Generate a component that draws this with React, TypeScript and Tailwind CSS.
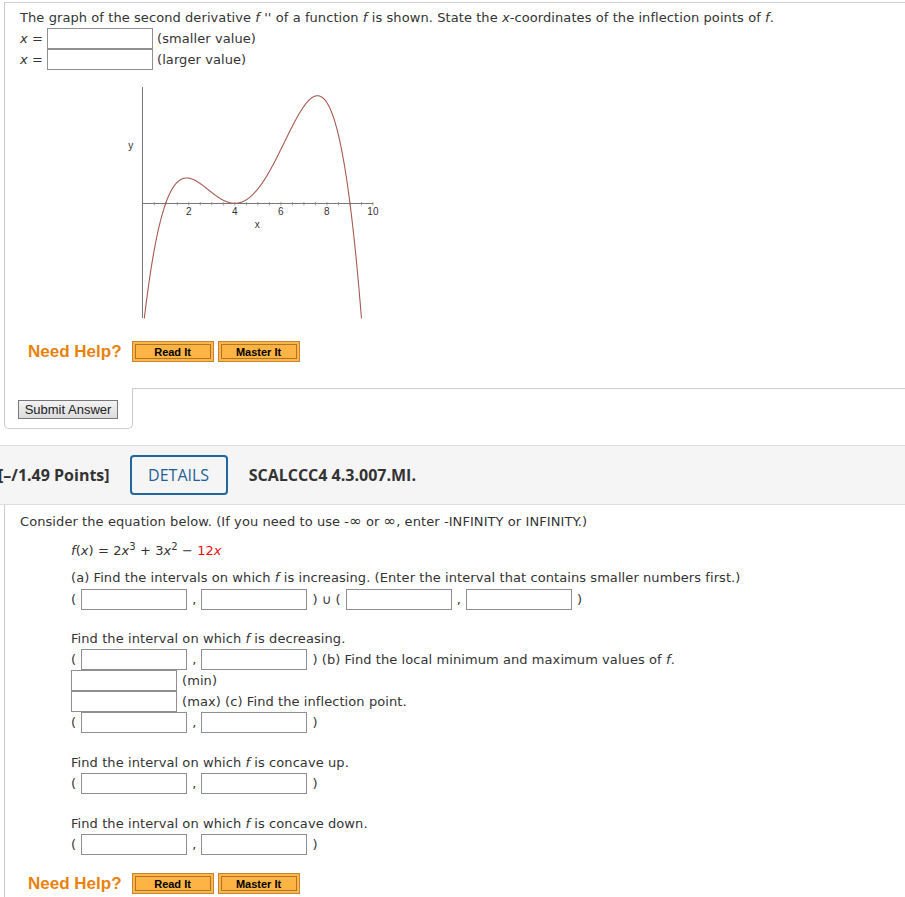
import React from 'react';

const g = (x: number) => -(x - 1) * (x - 4) ** 2 * (x - 9);
const X0 = 142.7;
const U = 23.03;
const Y0 = 203.3;
const K = 0.898;

function curvePath() {
  const pts: string[] = [];
  for (let x = 0; x <= 9.7; x += 0.02) {
    pts.push(`${(X0 + x * U).toFixed(2)},${(Y0 - K * g(x)).toFixed(2)}`);
  }
  return 'M' + pts.join(' L');
}

function Graph() {
  const ticks: number[] = [];
  for (let t = 0.5; t <= 10; t += 0.5) ticks.push(t);
  return (
    <svg width="272" height="240" viewBox="118 84 272 240" className="ml-[98px] mt-[14px] block">
      <defs>
        <clipPath id="plot">
          <rect x="118" y="84" width="272" height="234.5" />
        </clipPath>
      </defs>
      <line x1="142.5" y1="87" x2="142.5" y2="318" stroke="#777" strokeWidth="1" />
      <line x1="142.5" y1="203.5" x2="373" y2="203.5" stroke="#777" strokeWidth="1" />
      {ticks.map((t) => (
        <line key={t} x1={X0 + t * U} y1="202" x2={X0 + t * U} y2="205.5" stroke="#888" strokeWidth="0.8" />
      ))}
      {[2, 4, 6, 8, 10].map((n) => (
        <text key={n} x={X0 + n * U} y="215" fontSize="10" textAnchor="middle" fill="#333" fontFamily="Liberation Sans, Arial, sans-serif">
          {n}
        </text>
      ))}
      <text x="257.3" y="227.5" fontSize="10" textAnchor="middle" fill="#333" fontFamily="Liberation Sans, Arial, sans-serif">x</text>
      <text x="130.7" y="149" fontSize="10" textAnchor="middle" fill="#333" fontFamily="Liberation Sans, Arial, sans-serif">y</text>
      <path d={curvePath()} fill="none" stroke="#a65a50" strokeWidth="1.1" clipPath="url(#plot)" />
    </svg>
  );
}

function Box({ className = '' }: { className?: string }) {
  return <span className={`inline-block w-[106px] h-[21px] border border-[#8f8f8f] bg-white shrink-0 ${className}`} />;
}

function Interval({ children }: { children?: React.ReactNode }) {
  return (
    <div className="flex items-center h-[21px] whitespace-pre">
      <span>(</span>
      <Box className="ml-[5px]" />
      <span className="mx-[5px]">,</span>
      <Box />
      <span className="ml-[5px]">)</span>
      {children}
    </div>
  );
}

function HelpRow({ className = '' }: { className?: string }) {
  const btn =
    "h-[21px] w-[82px] border border-[#c98330] bg-[#fdb444] shadow-[inset_0_0_0_2px_#fdb648,inset_0_0_0_3px_#b0732a] text-[11px] font-bold text-black tracking-normal font-['Liberation_Sans',Arial,sans-serif] flex items-center justify-center";
  return (
    <div className={`flex items-center ml-[8px] ${className}`}>
      <span className="text-[17px] font-bold text-[#e8820c] tracking-normal font-['Liberation_Sans',Arial,sans-serif] leading-[21px]">
        Need Help?
      </span>
      <div className="flex gap-[4px] ml-[10px]">
        <span className={btn}>Read It</span>
        <span className={btn}>Master It</span>
      </div>
    </div>
  );
}

export default function App() {
  return (
    <div className="bg-white min-h-[897px] pt-[2px] text-[#333] text-[13px] leading-[20px] tracking-[0.08px] font-['DejaVu_Sans',Verdana,sans-serif] overflow-hidden">
      {/* Question 1 */}
      <div className="ml-[4px] border-l border-t border-b border-[#cccccc] pl-[15px] pt-[5px] pb-[26px]">
        <p>
          The graph of the second derivative <i>f</i> '' of a function <i>f</i> is shown. State the <i>x</i>-coordinates of
          the inflection points of <i>f</i>.
        </p>
        <div className="flex items-center h-[21px]">
          <span className="w-[27px]"><i>x</i> =</span>
          <Box />
          <span className="ml-[4px]">(smaller value)</span>
        </div>
        <div className="flex items-center h-[21px]">
          <span className="w-[27px]"><i>x</i> =</span>
          <Box />
          <span className="ml-[4px]">(larger value)</span>
        </div>
        <Graph />
        <HelpRow className="mt-[17px]" />
      </div>
      <div className="ml-[4px] -mt-px w-[129px] h-[41px] bg-white border-l border-r border-b border-[#cccccc] rounded-b-[5px] pl-[13px] pt-[12px]">
        <span className="flex items-center justify-center w-[100px] h-[19px] border border-[#777] bg-gradient-to-b from-[#f2f2f2] to-[#dcdcdc] text-[13px] text-[#222] tracking-normal font-['Liberation_Sans',Arial,sans-serif]">
          Submit Answer
        </span>
      </div>

      {/* Question 2 header */}
      <div className="mt-[16px] h-[60px] border-t border-b border-[#dddddd] bg-[#f5f5f5] flex items-center font-['Open_Sans',sans-serif] text-[16px] tracking-normal text-[#333]">
        <span className="font-bold -ml-[2px]">[–/1.49 Points]</span>
        <span className="ml-[20px] w-[98px] h-[40px] border-2 border-[#1f679e] rounded-[4px] flex items-center justify-center text-[#1f5f96]">
          DETAILS
        </span>
        <span className="ml-[21px] font-bold">SCALCCC4 4.3.007.MI.</span>
      </div>

      {/* Question 2 body */}
      <div className="ml-[4px] border-l border-[#cccccc] pl-[15px] pt-[6px] pb-[10px]">
        <p>
          Consider the equation below. (If you need to use -<span className="text-[15px]">∞</span> or{' '}
          <span className="text-[15px]">∞</span>, enter -INFINITY or INFINITY.)
        </p>
        <div className="ml-[51px]">
          <p className="mt-[9px]">
            <i>f</i>(<i>x</i>) = 2<i>x</i>
            <sup className="text-[10px]">3</sup> + 3<i>x</i>
            <sup className="text-[10px]">2</sup> − <span className="text-[#e8110f]">12<i>x</i></span>
          </p>
          <p className="mt-[7px]">
            (a) Find the intervals on which <i>f</i> is increasing. (Enter the interval that contains smaller numbers first.)
          </p>
          <div className="mt-px">
            <Interval>
              <span className="whitespace-pre"> ∪ (</span>
              <Box className="ml-[5px]" />
              <span className="mx-[5px]">,</span>
              <Box />
              <span className="ml-[5px]">)</span>
            </Interval>
          </div>
          <p className="mt-[19px]">
            Find the interval on which <i>f</i> is decreasing.
          </p>
          <Interval>
            <span className="whitespace-pre"> (b) Find the local minimum and maximum values of <i>f</i>.</span>
          </Interval>
          <div className="flex items-center h-[21px]">
            <Box />
            <span className="ml-[5px]">(min)</span>
          </div>
          <div className="flex items-center h-[21px]">
            <Box />
            <span className="ml-[5px]">(max) (c) Find the inflection point.</span>
          </div>
          <Interval />
          <p className="mt-[20px]">
            Find the interval on which <i>f</i> is concave up.
          </p>
          <Interval />
          <p className="mt-[20px]">
            Find the interval on which <i>f</i> is concave down.
          </p>
          <Interval />
        </div>
        <HelpRow className="mt-[18px]" />
      </div>
    </div>
  );
}
